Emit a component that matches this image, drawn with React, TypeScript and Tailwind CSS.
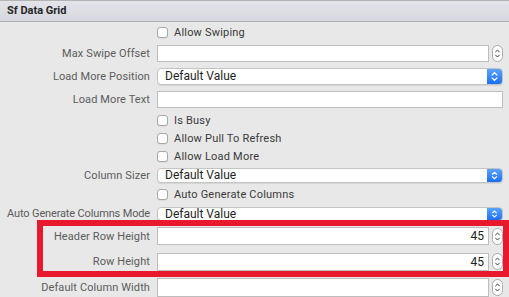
import React from 'react'

const font = { fontFamily: 'Roboto, "Liberation Sans", Arial, sans-serif' }

function Stepper() {
  return (
    <svg width="11" height="17" viewBox="0 0 11 17" className="shrink-0">
      <rect x="0.5" y="0.5" width="10" height="16" rx="5" fill="#fff" stroke="#a9a9a9" />
      <path d="M3.3 7.2 L5.5 5 L7.7 7.2" fill="none" stroke="#3a3a3a" strokeWidth="1" />
      <path d="M3.3 9.8 L5.5 12 L7.7 9.8" fill="none" stroke="#3a3a3a" strokeWidth="1" />
    </svg>
  )
}

function SelectArrows() {
  return (
    <svg width="15" height="100%" viewBox="0 0 15 16" className="h-full">
      <path d="M4.5 6.8 L7.5 4 L10.5 6.8" fill="none" stroke="#fff" strokeWidth="1.4" />
      <path d="M4.5 9.2 L7.5 12 L10.5 9.2" fill="none" stroke="#fff" strokeWidth="1.4" />
    </svg>
  )
}

function Label({ text, tight }: { text: string; tight?: boolean }) {
  return (
    <div className={`w-[150px] shrink-0 flex justify-end text-[11px] ${tight ? 'tracking-[-0.15px]' : 'tracking-[0.1px]'} text-[#5c5c5c] whitespace-nowrap leading-none`}>
      {text}
    </div>
  )
}

function Checkbox({ label }: { label: string }) {
  return (
    <div className="flex items-center ml-[157px]">
      <span className="w-[11px] h-[11px] rounded-[3px] border border-[#a8a8a8] bg-white shadow-[0_0.5px_0.5px_rgba(0,0,0,0.1)]" />
      <span className="ml-[6px] text-[11px] tracking-[0.2px] text-[#3a3a3a] leading-none">{label}</span>
    </div>
  )
}

function TextInput({ value, stepper, h = 'h-[17px]' }: { value?: string; stepper?: boolean; h?: string }) {
  return (
    <div className="flex items-center flex-1 ml-[7px] mr-[6px]">
      <div className={`flex-1 ${h} bg-white border border-[#bdbdbd] flex items-center justify-end pr-[4px] text-[12px] text-[#222]`}>
        {value}
      </div>
      {stepper && <div className="ml-[3px]"><Stepper /></div>}
    </div>
  )
}

function Select({ h }: { h: string }) {
  return (
    <div className={`flex flex-1 ml-[7px] mr-[6px] ${h} rounded-[4px] bg-white border border-[#c4c4c4] shadow-[0_1px_1px_rgba(0,0,0,0.08)] overflow-hidden`}>
      <div className="flex-1 flex items-center pl-[7px] text-[12px] text-[#1f1f1f] leading-none">Default Value</div>
      <div className="w-[15px] bg-gradient-to-b from-[#59a3ff] to-[#1a6ef6] flex items-center justify-center">
        <SelectArrows />
      </div>
    </div>
  )
}

export default function App() {
  return (
    <div className="relative w-[509px] h-[297px] overflow-hidden bg-[#e8e8e8]" style={font}>
      <div className="h-[22px] border-t border-b border-[#b3b3b3] bg-gradient-to-b from-[#e3e3ea] to-[#d7d7df] flex items-center pl-[7px]">
        <span className="text-[11px] font-bold text-[#262626]">Sf Data Grid</span>
      </div>

      <div className="h-[20px] flex items-center"><Checkbox label="Allow Swiping" /></div>
      <div className="h-[22px] flex items-center"><Label text="Max Swipe Offset" /><TextInput stepper /></div>
      <div className="h-[24px] flex items-center"><Label text="Load More Position" /><Select h="h-[17px]" /></div>
      <div className="h-[22px] flex items-center"><Label text="Load More Text" /><TextInput /></div>
      <div className="h-[20px] flex items-center"><Checkbox label="Is Busy" /></div>
      <div className="h-[17px] flex items-center"><Checkbox label="Allow Pull To Refresh" /></div>
      <div className="h-[18px] flex items-center"><Checkbox label="Allow Load More" /></div>
      <div className="h-[20px] flex items-center"><Label text="Column Sizer" /><Select h="h-[15px]" /></div>
      <div className="h-[19px] flex items-center"><Checkbox label="Auto Generate Columns" /></div>
      <div className="h-[19px] flex items-center"><Label text="Auto Generate Columns Mode" tight /><Select h="h-[14px]" /></div>
      <div className="h-[26px] flex items-center"><Label text="Header Row Height" /><TextInput value="45" stepper h="h-[18px]" /></div>
      <div className="h-[25px] flex items-center"><Label text="Row Height" /><TextInput value="45" stepper h="h-[18px]" /></div>
      <div className="h-[27px] flex items-center"><Label text="Default Column Width" /><TextInput stepper h="h-[19px]" /></div>

      <div className="absolute left-[37px] top-[220px] w-[472px] h-[57px] border-[6px] border-[#e8192c] pointer-events-none" />
    </div>
  )
}
